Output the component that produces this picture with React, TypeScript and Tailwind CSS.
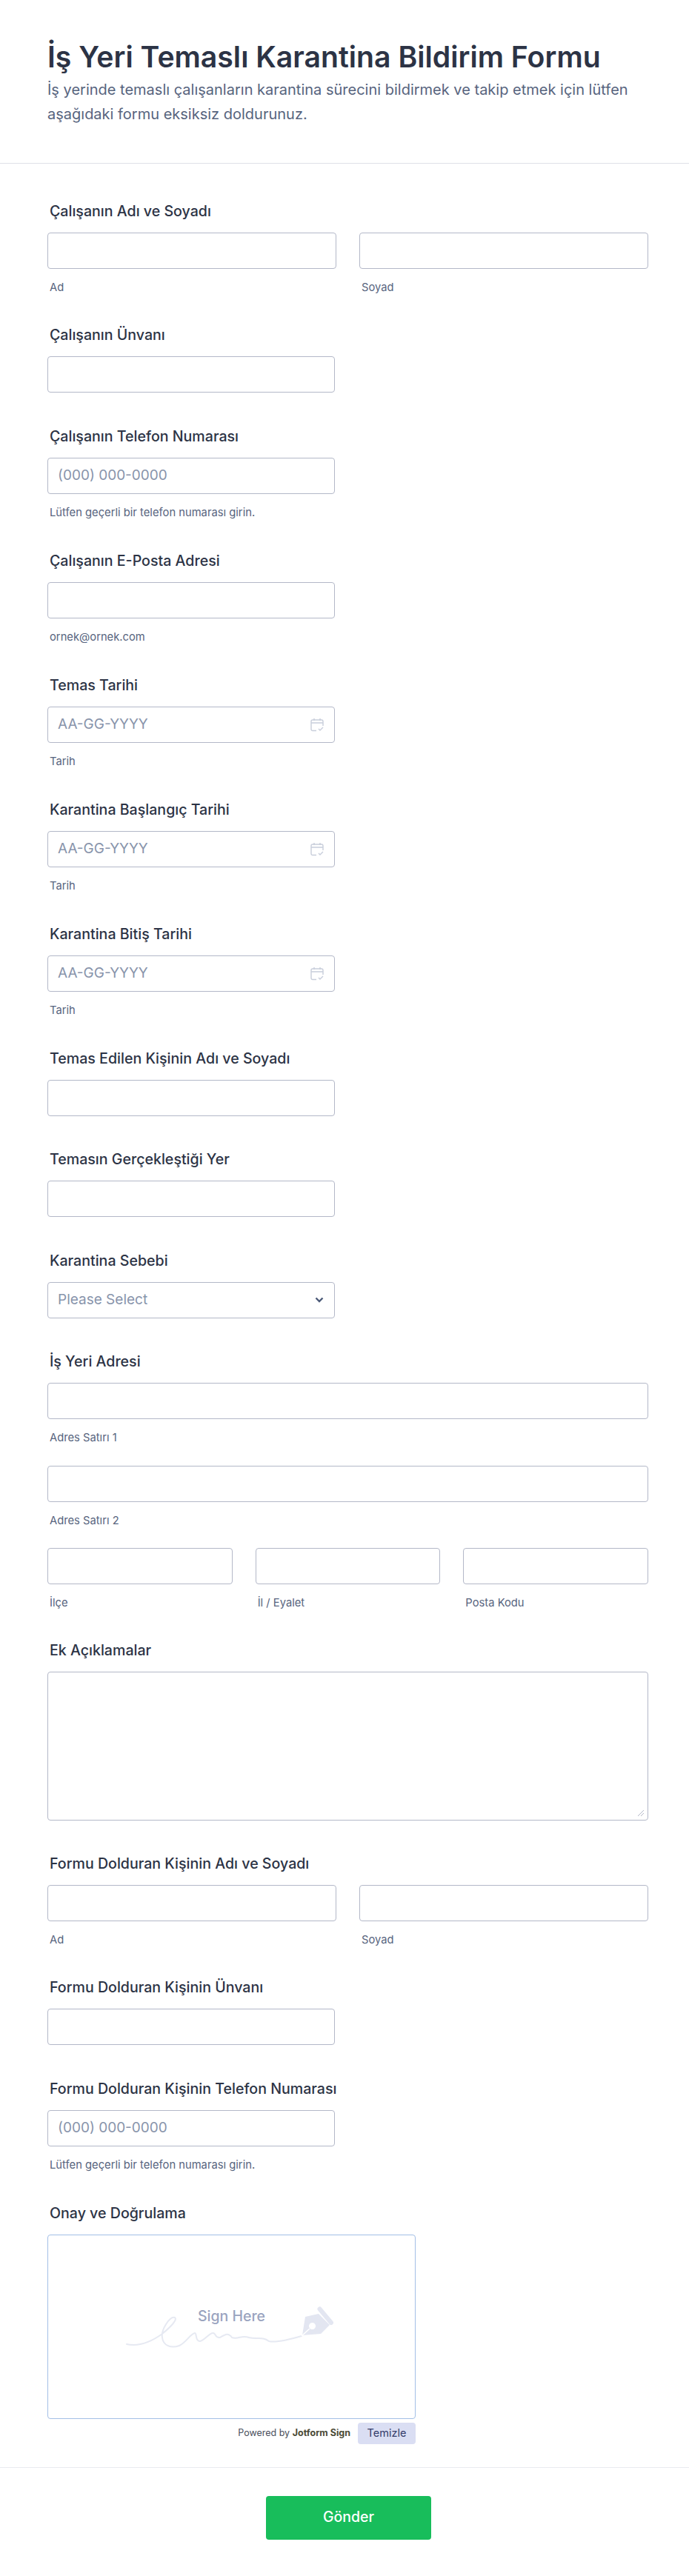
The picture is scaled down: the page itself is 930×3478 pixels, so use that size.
function Label({ children }: { children: React.ReactNode }) {
  return <div className="h-6 mb-[17px] pl-[3px] text-[19.6px] leading-6 font-[450] text-[#2c3345]">{children}</div>;
}

function Sub({ children }: { children: React.ReactNode }) {
  return <div className="mt-[17px] h-4 pl-[3px] text-[14.75px] leading-4 text-[#57647e]">{children}</div>;
}

function Box({ className = "", children }: { className?: string; children?: React.ReactNode }) {
  return (
    <div className={`h-[49px] rounded border border-[#b3b8c8] bg-white flex items-center justify-between px-[13px] text-[19px] text-[#8894ab] ${className}`}>
      {children}
    </div>
  );
}

function CalendarIcon() {
  return (
    <svg width="18" height="19" viewBox="0 0 18 19" fill="none" stroke="#c8cedb" strokeWidth="1.4" className="mr-px">
      <path d="M8 17.5H3a2 2 0 0 1-2-2V5a2 2 0 0 1 2-2h12a2 2 0 0 1 2 2v6" />
      <path d="M1 7h16M5 1v3M13 1v3" />
      <path d="M11 15l2 2 4-4" />
    </svg>
  );
}

function DateField({ label }: { label: string }) {
  return (
    <div className="pb-[45px]">
      <Label>{label}</Label>
      <Box className="w-[388px]">
        <span>AA-GG-YYYY</span>
        <CalendarIcon />
      </Box>
      <Sub>Tarih</Sub>
    </div>
  );
}

function TextField({ label, sub, placeholder }: { label: string; sub?: string; placeholder?: string }) {
  return (
    <div className={sub ? "pb-[45px]" : "pb-[46.5px]"}>
      <Label>{label}</Label>
      <Box className="w-[388px]">{placeholder}</Box>
      {sub && <Sub>{sub}</Sub>}
    </div>
  );
}

function NameField({ label }: { label: string }) {
  return (
    <div className="pb-[44px]">
      <Label>{label}</Label>
      <div className="grid grid-cols-2 gap-[31px]">
        <div>
          <Box />
          <Sub>Ad</Sub>
        </div>
        <div>
          <Box />
          <Sub>Soyad</Sub>
        </div>
      </div>
    </div>
  );
}

function SignatureArt() {
  return (
    <svg viewBox="165 3110 295 70" className="absolute left-[100px] top-[91px] w-[295px] h-[70px]" fill="none">
      <path
        d="M171 3166 C190 3170,208 3160,219 3152 C230 3143,240 3133,236 3130 C229 3128,217 3147,219 3157 C220 3168,231 3172,242 3168 C251 3164,258 3151,263 3151 C266 3151,263 3162,270 3162 C277 3160,283 3150,288 3151 C292 3152,290 3158,297 3157 C304 3153,308 3150,313 3157 C322 3160,326 3153,336 3157 C347 3160,354 3155,363 3162 C372 3164,390 3160,407 3155"
        stroke="#e6e9f2"
        strokeWidth="2"
        strokeLinecap="round"
      />
      <path
        fillRule="evenodd"
        fill="#e3e6f1"
        d="M408 3154 L412 3129 L430 3125 L445 3140 L433 3152 Z M421.5 3137 a4.5 4.5 0 1 0 0.01 0 Z"
      />
      <path d="M407 3155 L418 3145" stroke="#ffffff" strokeWidth="1.5" />
      <path d="M431.5 3118.5 L447 3137" stroke="#e3e6f1" strokeWidth="6" strokeLinecap="round" />
    </svg>
  );
}

export default function App() {
  return (
    <div className="w-[930px] min-h-[3478px] bg-white font-['Inter',sans-serif]">
      {/* Header */}
      <div className="h-[221px] border-b border-[#dfe1e8] px-16 pt-[50px]">
        <h1 className="text-[39.2px] leading-[54px] font-semibold text-[#2c3345]">İş Yeri Temaslı Karantina Bildirim Formu</h1>
        <p className="text-[20px] leading-[33px] text-[#57647e] mt-px">
          İş yerinde temaslı çalışanların karantina sürecini bildirmek ve takip etmek için lütfen
          <br />
          aşağıdaki formu eksiksiz doldurunuz.
        </p>
      </div>

      {/* Form */}
      <div className="pt-[52px] pl-16 w-[875px]">
        <NameField label="Çalışanın Adı ve Soyadı" />
        <TextField label="Çalışanın Ünvanı" />
        <TextField label="Çalışanın Telefon Numarası" placeholder="(000) 000-0000" sub="Lütfen geçerli bir telefon numarası girin." />
        <TextField label="Çalışanın E-Posta Adresi" sub="ornek@ornek.com" />
        <DateField label="Temas Tarihi" />
        <DateField label="Karantina Başlangıç Tarihi" />
        <DateField label="Karantina Bitiş Tarihi" />
        <TextField label="Temas Edilen Kişinin Adı ve Soyadı" />
        <TextField label="Temasın Gerçekleştiği Yer" />

        <div className="pb-[46.5px]">
          <Label>Karantina Sebebi</Label>
          <Box className="w-[388px]">
            <span>Please Select</span>
            <svg width="12" height="8" viewBox="0 0 12 8" fill="none" stroke="#4b5a78" strokeWidth="2.4" className="mr-px">
              <path d="M1.5 1.5L6 6l4.5-4.5" />
            </svg>
          </Box>
        </div>

        {/* Address */}
        <div className="pb-[44px]">
          <Label>İş Yeri Adresi</Label>
          <Box />
          <Sub>Adres Satırı 1</Sub>
          <Box className="mt-[29.5px]" />
          <Sub>Adres Satırı 2</Sub>
          <div className="grid grid-cols-3 gap-[31px] mt-[29.5px]">
            <div>
              <Box />
              <Sub>İlçe</Sub>
            </div>
            <div>
              <Box />
              <Sub>İl / Eyalet</Sub>
            </div>
            <div>
              <Box />
              <Sub>Posta Kodu</Sub>
            </div>
          </div>
        </div>

        <div className="pb-[46px]">
          <Label>Ek Açıklamalar</Label>
          <div className="relative h-[201px] mt-px rounded border border-[#b3b8c8]">
            <svg width="8" height="8" viewBox="0 0 8 8" stroke="#b3b8c8" className="absolute right-[5px] bottom-[5px]">
              <path d="M0 8L8 0M4 8l4-4" />
            </svg>
          </div>
        </div>

        <NameField label="Formu Dolduran Kişinin Adı ve Soyadı" />
        <TextField label="Formu Dolduran Kişinin Ünvanı" />
        <TextField label="Formu Dolduran Kişinin Telefon Numarası" placeholder="(000) 000-0000" sub="Lütfen geçerli bir telefon numarası girin." />

        {/* Signature */}
        <div className="w-[497px]">
          <Label>Onay ve Doğrulama</Label>
          <div className="relative h-[249px] mt-px rounded border border-[#a3bfe6]">
            <SignatureArt />
            <div className="absolute inset-x-0 top-[97px] text-center text-[19.5px] leading-6 font-medium text-[#9aa4bf]">Sign Here</div>
          </div>
          <div className="mt-[5px] flex items-center justify-end gap-[10px]">
            <span className="text-[12.5px] text-[#4a4f5c]">
              Powered by <span className="font-bold text-[#4a4a35]">Jotform Sign</span>
            </span>
            <span className="w-[78px] h-[29px] rounded bg-[#dadef3] text-[14.5px] flex items-center justify-center text-[#343c6a]">Temizle</span>
          </div>
        </div>
      </div>

      {/* Footer */}
      <div className="mt-[31px] border-t border-[#e9ebf0] pt-[38px] pl-[359px]">
        <button className="w-[223px] h-[59px] rounded bg-[#18bd5b] text-[19.5px] font-medium text-white">Gönder</button>
      </div>
    </div>
  );
}
